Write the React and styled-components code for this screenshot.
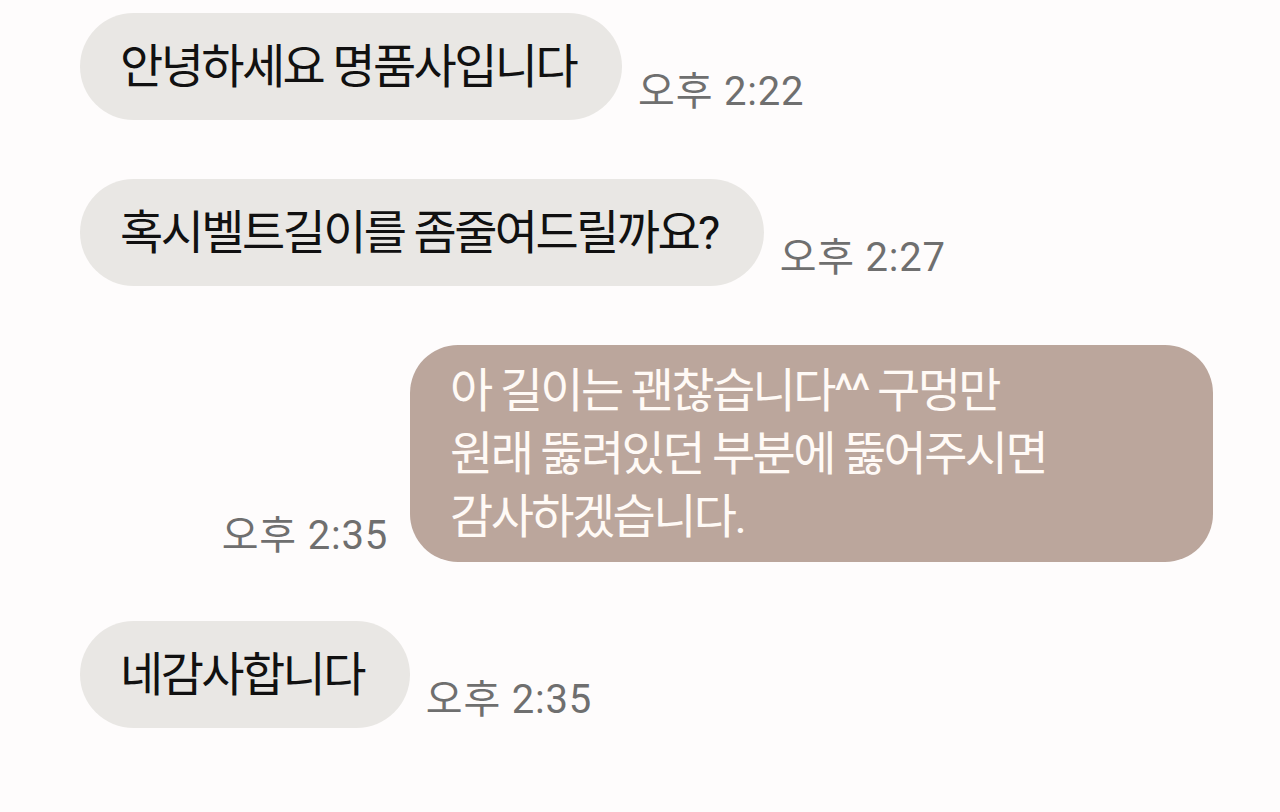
import React from "react";
import styled, { createGlobalStyle } from "styled-components";

const GlobalStyle = createGlobalStyle`
  html, body {
    margin: 0;
    padding: 0;
    background: #fefcfc;
  }
  body {
    font-family: Roboto, "Noto Sans CJK KR", sans-serif;
  }
`;

const messages = [
  { id: 1, mine: false, time: "오후 2:22", lines: ["안녕하세요 명품사입니다"] },
  { id: 2, mine: false, time: "오후 2:27", lines: ["혹시벨트길이를 좀줄여드릴까요?"] },
  {
    id: 3,
    mine: true,
    time: "오후 2:35",
    lines: [
      "아 길이는 괜찮습니다^^ 구멍만",
      "원래 뚫려있던 부분에 뚫어주시면",
      "감사하겠습니다.",
    ],
  },
  { id: 4, mine: false, time: "오후 2:35", lines: ["네감사합니다"] },
];

const ChatApp = () => {
  return (
    <Wrapper>
      <GlobalStyle />
      {messages.map((m) => (
        <Row key={m.id} mine={m.mine}>
          {m.mine && <Time mine>{m.time}</Time>}
          <Bubble mine={m.mine}>
            {m.lines.map((line, i) => (
              <Line key={i}>{line}</Line>
            ))}
          </Bubble>
          {!m.mine && <Time>{m.time}</Time>}
        </Row>
      ))}
    </Wrapper>
  );
};

const Wrapper = styled.div`
  width: 1280px;
  height: 812px;
  box-sizing: border-box;
  padding: 13px 67px 0 80px;
  display: flex;
  flex-direction: column;
  gap: 59px;
  background: #fefcfc;
  overflow: hidden;
`;

const Row = styled.div.withConfig({ shouldForwardProp: (p) => p !== "mine" })`
  display: flex;
  align-items: flex-end;
  justify-content: ${(p) => (p.mine ? "flex-end" : "flex-start")};
  gap: ${(p) => (p.mine ? "22px" : "16px")};
`;

const Bubble = styled.div.withConfig({ shouldForwardProp: (p) => p !== "mine" })`
  box-sizing: border-box;
  display: flex;
  flex-direction: column;
  justify-content: center;
  background: ${(p) => (p.mine ? "#bba69c" : "#e9e7e4")};
  color: ${(p) => (p.mine ? "#fffaf6" : "#111111")};
  border-radius: ${(p) => (p.mine ? "48px" : "54px")};
  padding: ${(p) => (p.mine ? "14px 40px" : "0 46px 0 40px")};
  min-height: 107px;
  width: ${(p) => (p.mine ? "803px" : "auto")};
  font-family: Roboto, "Noto Sans CJK KR", sans-serif;
  font-size: 47px;
  letter-spacing: -2.6px;
  line-height: 63px;
  font-weight: 400;
`;

const Line = styled.div`
  white-space: nowrap;
`;

const Time = styled.span.withConfig({ shouldForwardProp: (p) => p !== "mine" })`
  font-family: Roboto, "Noto Sans CJK KR", sans-serif;
  font-size: 40px;
  line-height: 1;
  letter-spacing: 0.8px;
  color: #6f6f6f;
  white-space: nowrap;
  padding-bottom: ${(p) => (p.mine ? "6px" : "8px")};
`;

export default ChatApp;
